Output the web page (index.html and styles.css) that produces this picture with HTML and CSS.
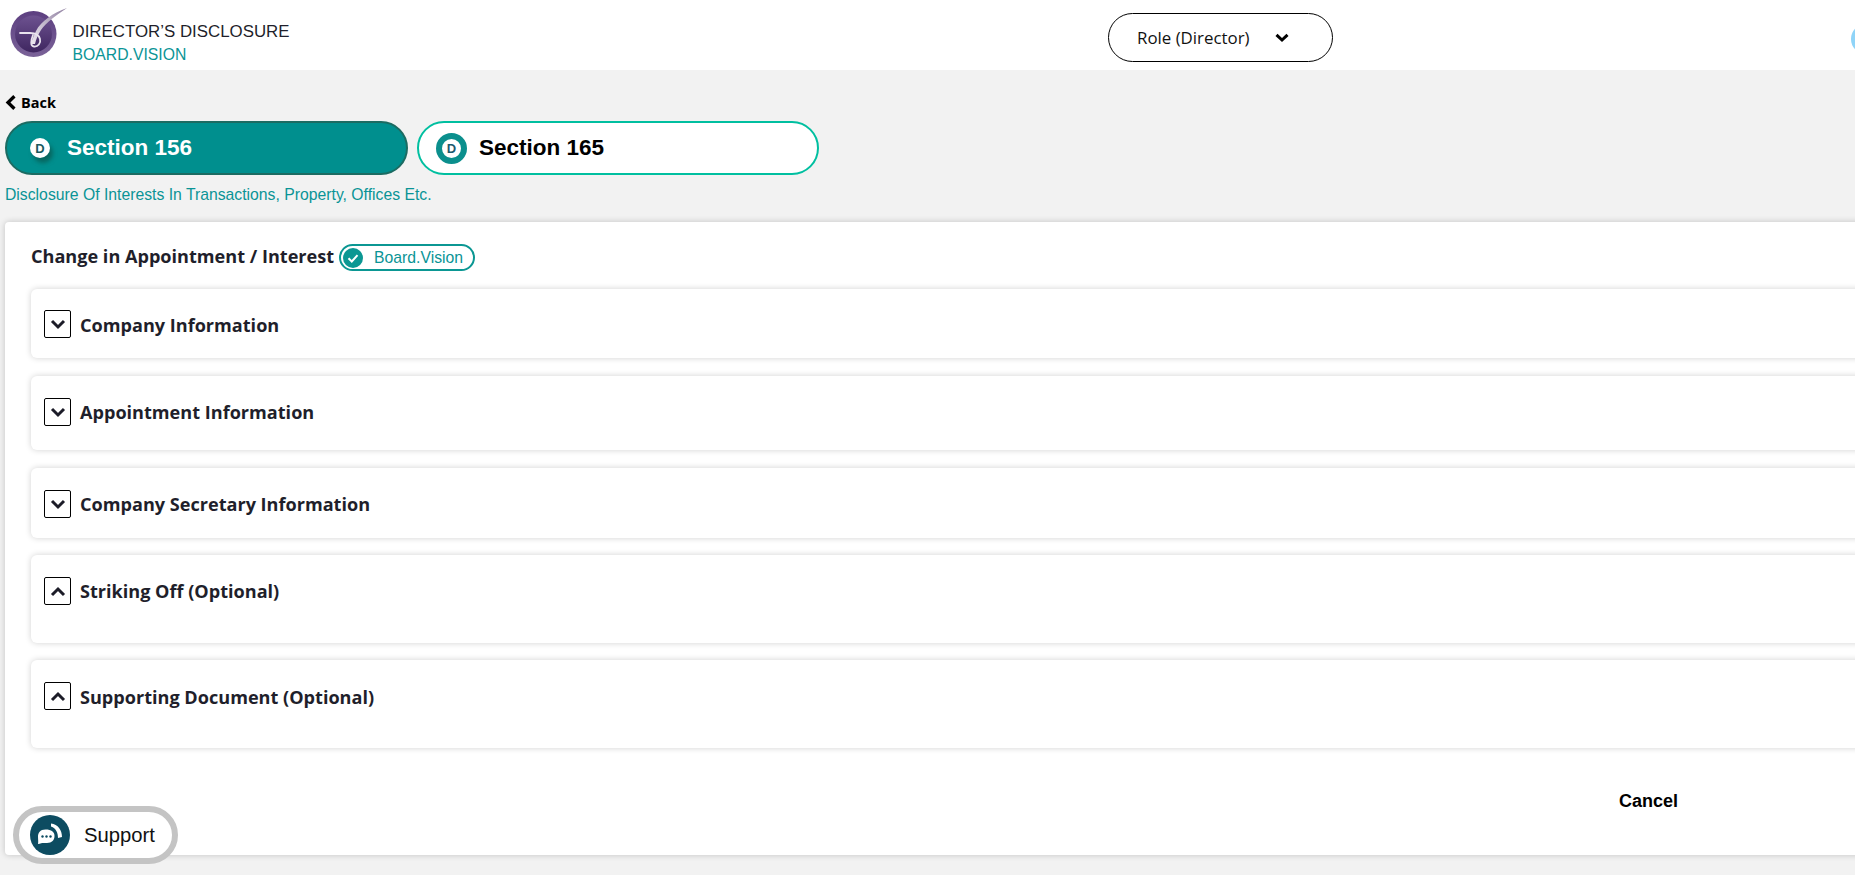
FILE: index.html
```html
<!DOCTYPE html>
<html lang="en">
<head>
<meta charset="utf-8">
<title>Director's Disclosure</title>
<link rel="stylesheet" href="styles.css">
</head>
<body>
<header class="topbar">
  <div class="brand">
    <svg class="logo" viewBox="0 0 70 60" width="70" height="60" aria-hidden="true">
      <defs>
        <linearGradient id="lg" x1="0" y1="0" x2="0" y2="1">
          <stop offset="0" stop-color="#5c3f80"/>
          <stop offset="1" stop-color="#7a6298"/>
        </linearGradient>
        <linearGradient id="li" x1="0" y1="0" x2="0" y2="1">
          <stop offset="0" stop-color="#6d5290"/>
          <stop offset="1" stop-color="#3f2660"/>
        </linearGradient>
        <linearGradient id="ls" x1="1" y1="0" x2="0" y2="1">
          <stop offset="0" stop-color="#8f7fa0"/>
          <stop offset="1" stop-color="#efeaf2"/>
        </linearGradient>
      </defs>
      <circle cx="33.5" cy="34" r="23" fill="url(#lg)"/>
      <circle cx="33.5" cy="34" r="18.5" fill="url(#li)"/>
      <path d="M67 8 C53 13 41 21 36 31 C34 35 32 40 31 44 L35 44 C36 39 38 35 41 30 C46 23 56 15 67 8 Z" fill="url(#ls)"/>
      <path d="M33 35 C31 40 30 46 34 46.5 C38 47 41 43 40 39 C39 35 35 33 30 33 L20 33" fill="none" stroke="#e9e3ee" stroke-width="1.8" stroke-linecap="round"/>
    </svg>
    <div class="brand-text">
      <div class="brand-title">DIRECTOR’S DISCLOSURE</div>
      <div class="brand-sub">BOARD.VISION</div>
    </div>
  </div>
  <div class="role">
    <span>Role (Director)</span>
    <svg class="role-chev" viewBox="0 0 14 10" width="14" height="10" aria-hidden="true"><path d="M1.5 1.8 L7 7 L12.5 1.8" fill="none" stroke="#000" stroke-width="3"/></svg>
  </div>
  <div class="avatar"></div>
</header>

<main class="page">
  <a class="back">
    <svg viewBox="0 0 11 15" width="11" height="15" aria-hidden="true"><path d="M9.4 1.2 L3 7.5 L9.4 13.8" fill="none" stroke="#000" stroke-width="3.3"/></svg>
    <span>Back</span>
  </a>

  <div class="tabs">
    <div class="tab tab-active">
      <span class="dot dot-solid">D</span>
      <span>Section 156</span>
    </div>
    <div class="tab tab-idle">
      <span class="dot dot-ring">D</span>
      <span>Section 165</span>
    </div>
  </div>
  <p class="subtitle">Disclosure Of Interests In Transactions, Property, Offices Etc.</p>

  <section class="card">
    <div class="card-head">
      <h2 class="card-title">Change in Appointment / Interest</h2>
      <span class="badge">
        <svg viewBox="0 0 20 20" width="20" height="20" aria-hidden="true"><circle cx="10" cy="10" r="10" fill="#0b9793"/><path d="M5.5 10.3 L8.8 13.5 L14.5 7.2" fill="none" stroke="#fff" stroke-width="2"/></svg>
        <span>Board.Vision</span>
      </span>
    </div>

    <div class="panel panel-1">
      <span class="toggle"><svg viewBox="0 0 16 11" width="16" height="11" aria-hidden="true"><path d="M2 2 L8 8 L14 2" fill="none" stroke="#1c1c28" stroke-width="3"/></svg></span>
      <h3 class="panel-title">Company Information</h3>
    </div>
    <div class="panel panel-2">
      <span class="toggle"><svg viewBox="0 0 16 11" width="16" height="11" aria-hidden="true"><path d="M2 2 L8 8 L14 2" fill="none" stroke="#1c1c28" stroke-width="3"/></svg></span>
      <h3 class="panel-title">Appointment Information</h3>
    </div>
    <div class="panel panel-3">
      <span class="toggle"><svg viewBox="0 0 16 11" width="16" height="11" aria-hidden="true"><path d="M2 2 L8 8 L14 2" fill="none" stroke="#1c1c28" stroke-width="3"/></svg></span>
      <h3 class="panel-title">Company Secretary Information</h3>
    </div>
    <div class="panel panel-4">
      <span class="toggle"><svg viewBox="0 0 16 11" width="16" height="11" aria-hidden="true"><path d="M2 9 L8 3 L14 9" fill="none" stroke="#1c1c28" stroke-width="3"/></svg></span>
      <h3 class="panel-title">Striking Off (Optional)</h3>
    </div>
    <div class="panel panel-5">
      <span class="toggle"><svg viewBox="0 0 16 11" width="16" height="11" aria-hidden="true"><path d="M2 9 L8 3 L14 9" fill="none" stroke="#1c1c28" stroke-width="3"/></svg></span>
      <h3 class="panel-title">Supporting Document (Optional)</h3>
    </div>

    <div class="actions"><button class="cancel" type="button">Cancel</button></div>
  </section>
</main>

<div class="support">
  <span class="support-icon">
    <svg viewBox="0 0 40 40" width="40" height="40" aria-hidden="true">
      <circle cx="20" cy="20" r="20" fill="#0d4c61"/>
      <path d="M15.5 14.5 C10 14.5 8 18 8 21.5 C8 24 8.5 27 8 29 C10.5 28.5 12 28 13.5 28 L17 28 C22 28 24.5 25 24.5 21 C24.5 17 21.5 14.5 15.5 14.5 Z" fill="#fff"/>
      <circle cx="12.5" cy="21.5" r="1.2" fill="#0d4c61"/><circle cx="16.5" cy="21.5" r="1.2" fill="#0d4c61"/><circle cx="20.5" cy="21.5" r="1.2" fill="#0d4c61"/>
      <path d="M21 8.5 C28 9.5 32 15 32 22 L28 23 C28 17.5 26 13.5 21 11.5 Z" fill="#fff"/>
    </svg>
  </span>
  <span>Support</span>
</div>
</body>
</html>
```

FILE: styles.css
```css
* { box-sizing: border-box; }
html, body { margin: 0; height: 875px; overflow: hidden; }
body {
  position: relative;
  background: #f2f2f2;
  font-family: "Liberation Sans", Arial, sans-serif;
  color: #000;
}
.topbar {
  display: flex;
  align-items: flex-start;
  height: 70px;
  background: #fff;
  overflow: hidden;
}
.brand {
  display: flex;
  flex: 0 0 1108px;
  align-items: flex-start;
}
.logo { flex: none; }
.brand-text { margin: 22px 0 0 2.5px; }
.brand-title { font-size: 16.875px; line-height: 20px; color: #1f1f2b; }
.brand-sub { font-size: 15.75px; line-height: 20px; margin-top: 3px; color: #0a9496; }
.role {
  display: flex;
  align-items: center;
  flex: none;
  width: 225px;
  height: 49px;
  margin-top: 13px;
  padding-left: 28px;
  border: 1px solid #000;
  border-radius: 25px;
  font-family: "Open Sans", sans-serif;
  font-size: 16.875px;
  color: #111;
}
.role-chev { margin-left: 25px; }
.avatar {
  width: 30px;
  height: 30px;
  margin: 24px 0 0 518px;
  flex: none;
  border-radius: 50%;
  background: #8fd4f8;
}
.page { padding: 18px 0 0 5px; width: 1910px; }
.back {
  display: flex;
  align-items: center;
  gap: 5px;
  height: 28px;
  font-family: "Open Sans", sans-serif;
  font-weight: 700;
  font-size: 14.5px;
}
.tabs { display: flex; gap: 9px; margin-top: 5px; }
.tab {
  display: flex;
  align-items: center;
  width: 402px;
  height: 54px;
  border-radius: 27px;
  font-weight: 700;
  font-size: 22.5px;
}
.tab-active {
  padding-left: 23px;
  gap: 17px;
  background: #008f8e;
  border: 2px solid #1c6b62;
  color: #fff;
  width: 403px;
}
.tab-idle {
  padding-left: 17px;
  gap: 12px;
  background: #fff;
  border: 2px solid #00bfa0;
  color: #000;
}
.dot {
  display: flex;
  align-items: center;
  justify-content: center;
  border-radius: 50%;
  flex: none;
  font-weight: 700;
}
.dot-solid {
  width: 20px;
  height: 20px;
  background: #fff;
  color: #1b5a5e;
  font-size: 13px;
  box-shadow: 3px 5px 4px rgba(10, 90, 80, .75);
}
.dot-ring {
  width: 31px;
  height: 31px;
  background: #fff;
  border: 6px solid #0b8f8d;
  color: #1b5a6e;
  font-size: 13px;
}
.subtitle {
  margin: 10px 0 0;
  font-size: 15.75px;
  line-height: 20px;
  color: #0a9496;
}
.card {
  width: 1905px;
  height: 633px;
  margin-top: 17px;
  padding: 0 26px;
  background: #fff;
  border-radius: 4px;
  box-shadow: 0 0 6px rgba(0, 0, 0, .2);
}
.card-head {
  display: flex;
  align-items: flex-start;
  gap: 5px;
  height: 67px;
  padding-top: 22px;
}
.card-title {
  margin: 0;
  font-family: "Open Sans", sans-serif;
  font-size: 18.1px;
  font-weight: 700;
  line-height: 24px;
  color: #1f1f2b;
}
.badge {
  display: flex;
  align-items: center;
  gap: 11px;
  width: 136px;
  height: 27px;
  padding-left: 2px;
  border: 2px solid #0b9793;
  border-radius: 14px;
  font-size: 15.75px;
  color: #0a9496;
}
.panel {
  display: flex;
  align-items: flex-start;
  gap: 9px;
  padding: 22px 0 0 13px;
  background: #fff;
  border-radius: 6px;
  box-shadow: 0 0 6px rgba(0, 0, 0, .18);
}
.panel-1 { height: 69px; margin-bottom: 18px; padding-top: 21px; }
.panel-2 { height: 74px; margin-bottom: 18px; }
.panel-3 { height: 70px; margin-bottom: 17px; }
.panel-4 { height: 88px; margin-bottom: 17px; }
.panel-5 { height: 88px; }
.panel-1 .panel-title, .panel-5 .panel-title { margin-top: 1px; }
.toggle {
  display: flex;
  align-items: center;
  justify-content: center;
  width: 27px;
  height: 28px;
  flex: none;
  border: 1px solid #000;
  border-radius: 2px;
}
.panel-title {
  margin: 0;
  font-family: "Open Sans", sans-serif;
  font-size: 18.1px;
  font-weight: 700;
  line-height: 28px;
  color: #1f1f2b;
}
.actions {
  display: flex;
  justify-content: flex-end;
  padding: 42px 206px 0 0;
}
.cancel {
  padding: 0;
  border: 0;
  background: none;
  font-family: "Liberation Sans", Arial, sans-serif;
  font-size: 18px;
  font-weight: 700;
  line-height: 22px;
  color: #000;
}
.support {
  position: absolute;
  left: 13px;
  top: 806px;
  display: flex;
  align-items: center;
  gap: 14px;
  width: 165px;
  height: 58px;
  padding-left: 11px;
  background: #fff;
  border: 6px solid #c4c4c4;
  border-radius: 29px;
  font-size: 20.25px;
  color: #111;
}
.support-icon { display: flex; }
```
